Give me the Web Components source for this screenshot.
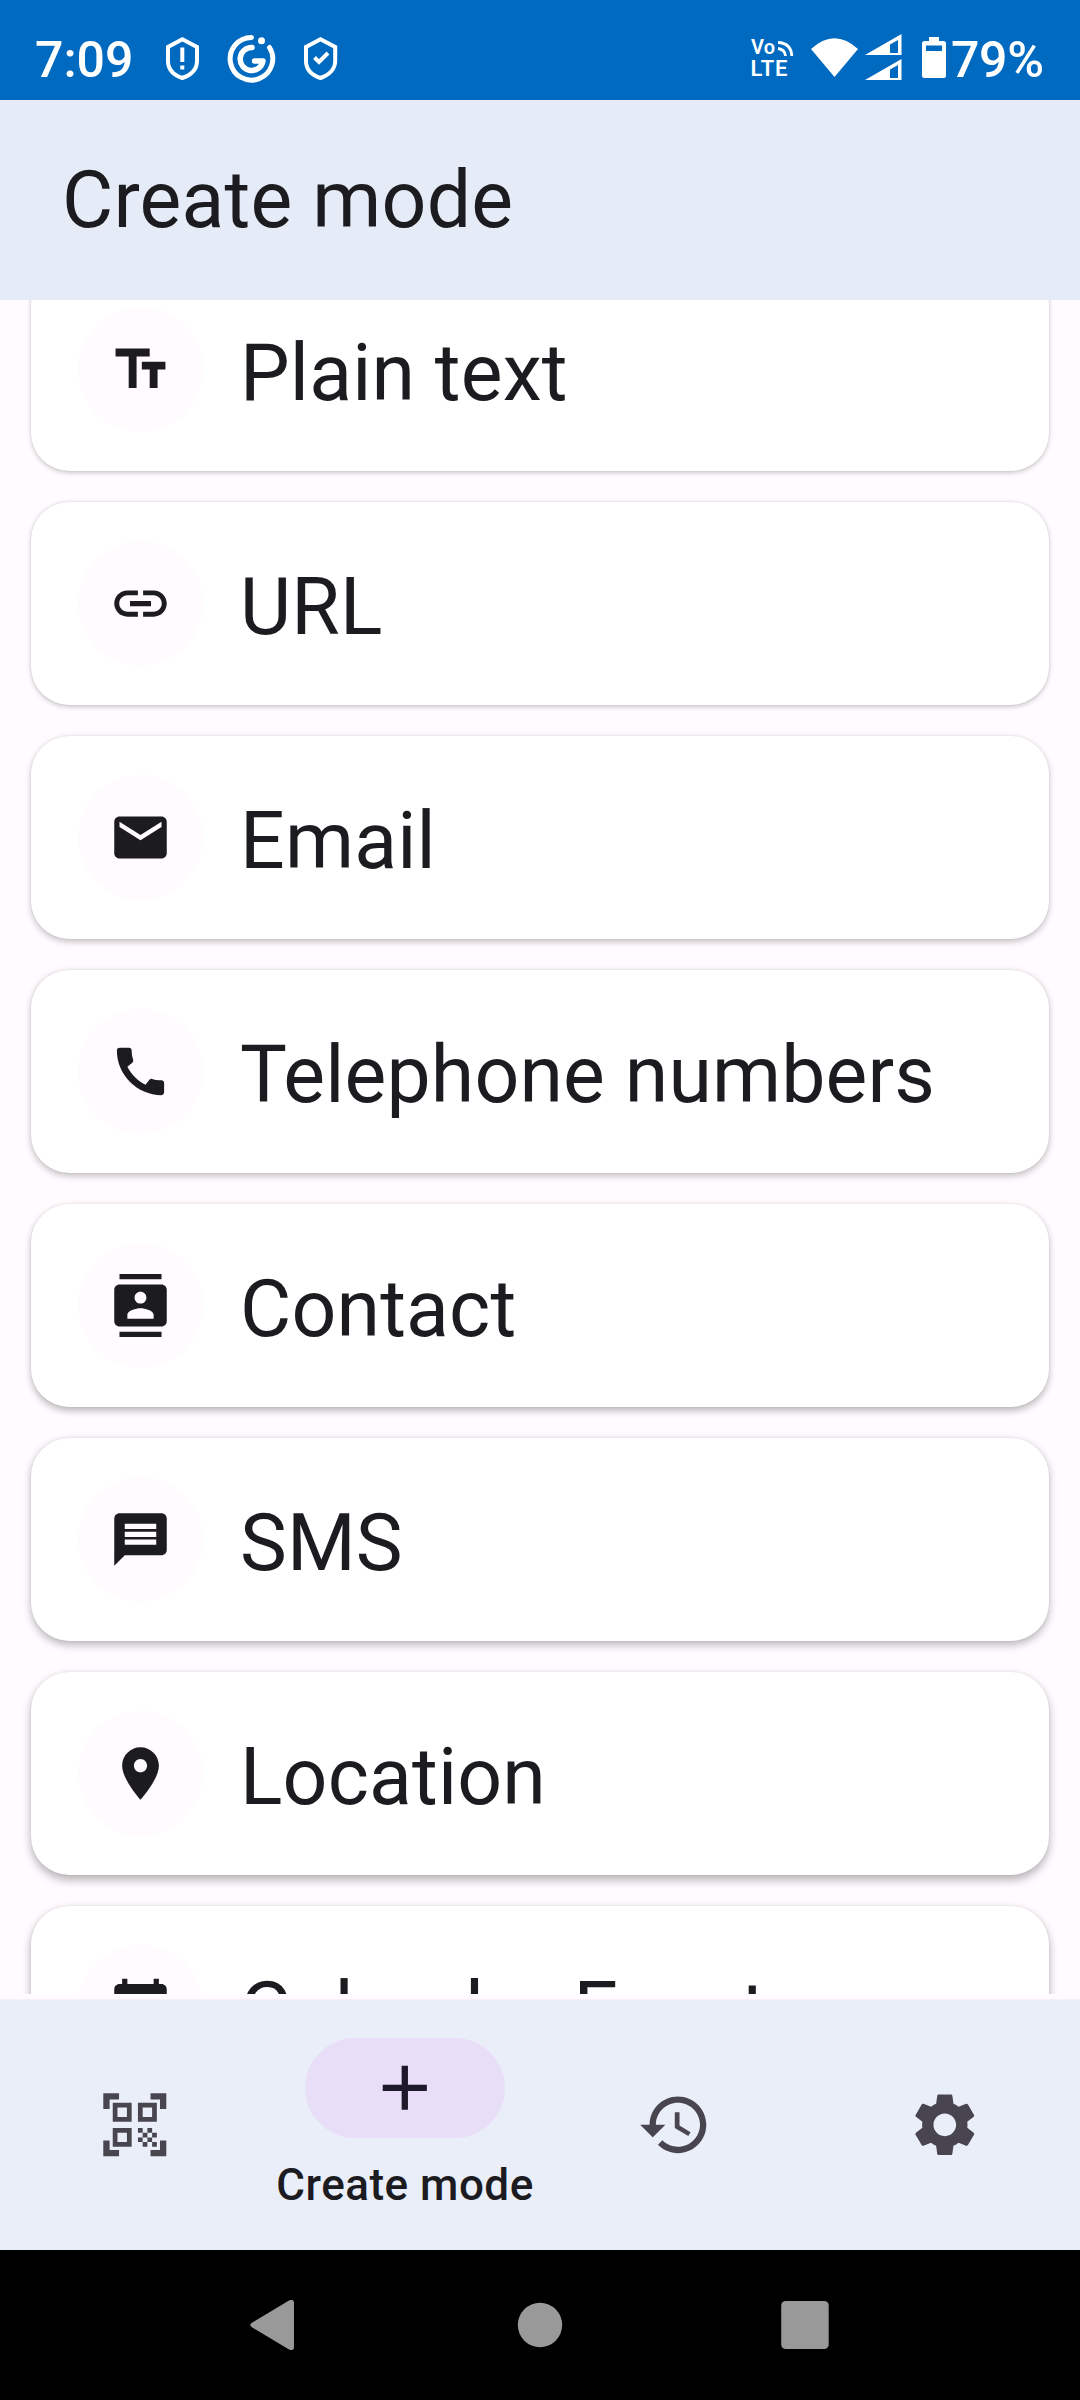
<!DOCTYPE html>
<html lang="en">
<head>
<meta charset="utf-8">
<title>Create mode</title>
<style>
html,body{margin:0;padding:0;background:#000}
body{width:1080px;height:2400px;overflow:hidden;font-family:Roboto,"Liberation Sans",sans-serif;color:#1c1b1f}
</style>
</head>
<body>
<qr-app></qr-app>
<script>
const ICONS = {
  text: 'M2.5 4v3h5v12h3V7h5V4h-13zm19 5h-9v3h3v7h3v-7h3V9z',
  link: 'M3.9 12c0-1.71 1.39-3.1 3.1-3.1h4V7H7c-2.76 0-5 2.24-5 5s2.24 5 5 5h4v-1.9H7c-1.71 0-3.1-1.39-3.1-3.1zM8 13h8v-2H8v2zm9-6h-4v1.9h4c1.71 0 3.1 1.39 3.1 3.1s-1.39 3.1-3.1 3.1h-4V17h4c2.76 0 5-2.24 5-5s-2.24-5-5-5z',
  email: 'M20 4H4c-1.1 0-1.99.9-1.99 2L2 18c0 1.1.9 2 2 2h16c1.1 0 2-.9 2-2V6c0-1.1-.9-2-2-2zm0 4l-8 5-8-5V6l8 5 8-5v2z',
  phone: 'M20.01 15.38c-1.23 0-2.42-.2-3.53-.56-.35-.12-.74-.03-1.01.24l-1.57 1.97c-2.83-1.35-5.48-3.9-6.89-6.83l1.95-1.66c.27-.28.35-.67.24-1.02-.37-1.11-.56-2.3-.56-3.53 0-.54-.45-.99-.99-.99H4.19C3.65 3 3 3.24 3 3.99 3 13.28 10.73 21 20.01 21c.71 0 .99-.63.99-1.18v-3.45c0-.54-.45-.99-.99-.99z',
  contact: 'M20 0H4v2h16V0zM4 24h16v-2H4v2zM20 4H4c-1.1 0-2 .9-2 2v12c0 1.1.9 2 2 2h16c1.1 0 2-.9 2-2V6c0-1.1-.9-2-2-2zm-8 2.75c1.24 0 2.25 1.01 2.25 2.25s-1.01 2.25-2.25 2.25S9.75 10.24 9.75 9 10.76 6.75 12 6.75zM17 17H7v-1.5c0-1.67 3.33-2.5 5-2.5s5 .83 5 2.5V17z',
  sms: 'M20 2H4c-1.1 0-1.99.9-1.99 2L2 22l4-4h14c1.1 0 2-.9 2-2V4c0-1.1-.9-2-2-2zm-2 12H6v-2h12v2zm0-3H6V9h12v2zm0-3H6V6h12v2z',
  place: 'M12 2C8.13 2 5 5.13 5 9c0 5.25 7 13 7 13s7-7.75 7-13c0-3.87-3.13-7-7-7zm0 9.5c-1.38 0-2.5-1.12-2.5-2.5s1.12-2.5 2.5-2.5 2.5 1.12 2.5 2.5-1.12 2.5-2.5 2.5z',
  calendar: 'M20 3h-1V1h-2v2H7V1H5v2H4c-1.1 0-2 .9-2 2v16c0 1.1.9 2 2 2h16c1.1 0 2-.9 2-2V5c0-1.1-.9-2-2-2zm0 18H4V8h16v13z',
  scan: 'M9.5,6.5v3h-3v-3H9.5M11,5H5v6h6V5zM9.5,14.5v3h-3v-3H9.5M11,13H5v6h6V13zM17.5,6.5v3h-3v-3H17.5M19,5h-6v6h6V5zM13,13h1.5v1.5H13zM14.5,14.5H16V16h-1.5zM16,13h1.5v1.5H16zM13,16h1.5v1.5H13zM14.5,17.5H16V19h-1.5zM16,16h1.5v1.5H16zM17.5,14.5H19V16h-1.5zM17.5,17.5H19V19h-1.5zM22,7h-2V4h-3V2h5zM22,22v-5h-2v3h-3v2zM2,22h5v-2H4v-3H2zM2,2v5h2V4h3V2z',
  add: 'M19 13h-6v6h-2v-6H5v-2h6V5h2v6h6v2z',
  history: 'M13 3c-4.97 0-9 4.03-9 9H1l3.89 3.89.07.14L9 12H6c0-3.87 3.13-7 7-7s7 3.13 7 7-3.13 7-7 7c-1.93 0-3.68-.79-4.94-2.06l-1.42 1.42C8.27 19.99 10.51 21 13 21c4.97 0 9-4.03 9-9s-4.03-9-9-9zm-1 5v5l4.28 2.54.72-1.21-3.5-2.08V8H12z',
  settings: 'M19.14 12.94c.04-.3.06-.61.06-.94 0-.32-.02-.64-.07-.94l2.03-1.58c.18-.14.23-.41.12-.61l-1.92-3.32c-.12-.22-.37-.29-.59-.22l-2.39.96c-.5-.38-1.03-.7-1.62-.94l-.36-2.54c-.04-.24-.24-.41-.48-.41h-3.84c-.24 0-.43.17-.47.41l-.36 2.54c-.59.24-1.13.57-1.62.94l-2.39-.96c-.22-.08-.47 0-.59.22L2.74 8.87c-.12.21-.08.47.12.61l2.03 1.58c-.05.3-.09.63-.09.94s.02.64.07.94l-2.03 1.58c-.18.14-.23.41-.12.61l1.92 3.32c.12.22.37.29.59.22l2.39-.96c.5.38 1.03.7 1.62.94l.36 2.54c.05.24.24.41.48.41h3.84c.24 0 .44-.17.47-.41l.36-2.54c.59-.24 1.13-.56 1.62-.94l2.39.96c.22.08.47 0 .59-.22l1.92-3.32c.12-.22.07-.47-.12-.61l-2.01-1.58zM12 15.6c-1.98 0-3.6-1.62-3.6-3.6s1.62-3.6 3.6-3.6 3.6 1.62 3.6 3.6-1.62 3.6-3.6 3.6z'
};

class Base extends HTMLElement {
  connectedCallback() {
    if (!this.shadowRoot) this.attachShadow({ mode: 'open' }).innerHTML = this.view();
  }
}

customElements.define('md-icon', class extends Base {
  view() {
    const s = this.getAttribute('size') || 63;
    return `<style>:host{display:block;flex:none;width:${s}px;height:${s}px}svg{display:block;fill:currentColor}</style>
    <svg width="${s}" height="${s}" viewBox="0 0 24 24"><path fill-rule="evenodd" d="${ICONS[this.getAttribute('name')]}"/></svg>`;
  }
});

customElements.define('status-bar', class extends Base {
  view() {
    return `<style>
    :host{display:flex;flex:none;box-sizing:border-box;height:100px;background:#006ac1;color:#fff;padding:25px 36px 0 35px;justify-content:space-between;font-weight:500;font-size:50px;line-height:70px}
    div{display:flex}
    .time{width:120px}
    .level{width:93px;margin-left:-2px;letter-spacing:-.3px}
    svg{display:block;flex:none;fill:none;stroke:#fff}
    </style>
    <div><span class="time">7:09</span>
    <svg width="190" height="65" viewBox="155 25 190 65">
      <g stroke-width="4"><path d="M182.300 39.200L197 47V61C197 69 191 75 182.300 78C173.500 75 168 69 168 61V47Z"/><path d="M182.300 47.500V62M182.300 65.500V69.500"/></g>
      <path stroke-width="5" stroke-linecap="round" d="M251.500 37.500A21.300 21.300 0 1 0 269.500 47.500"/>
      <path stroke-width="5.500" stroke-linecap="round" stroke-linejoin="round" d="M252 47.500A11.500 11.500 0 1 0 263 61H254.500"/>
      <circle cx="261.500" cy="40.800" r="3.500" fill="#fff" stroke="none"/>
      <g stroke-width="4"><path d="M320.500 39.200L335.200 47V61C335.200 69 329 75 320.500 78C311.500 75 306 69 306 61V47Z"/><path d="M314.500 57.500L319 62L328 53"/></g>
    </svg></div>
    <div>
    <svg width="213" height="65" viewBox="740 25 213 65">
      <g fill="#fff" stroke="none" font-family="Roboto" font-weight="600"><text x="751" y="54" font-size="20" textLength="24">Vo</text><text x="750.500" y="76.300" font-size="22" textLength="37">LTE</text></g>
      <path stroke-width="2.800" d="M778 42.500Q791 43 791.800 56M778 48.500Q785 49.500 785.500 56"/>
      <path fill="#fff" stroke="none" d="M811 49Q834.500 27.500 858 49L834.500 77Z"/>
      <path fill="#fff" stroke="none" fill-rule="evenodd" d="M865 55L901.500 34V55ZM890 44.500V53H898V40ZM865 80L901.500 59V80ZM890 69.500V78H898V65Z"/>
      <path fill="#fff" stroke="none" fill-rule="evenodd" d="M929 37H939V41H943.500Q946 41 946 43.500V75.500Q946 78 943.500 78H924.500Q922 78 922 75.500V43.500Q922 41 924.500 41H929ZM926 45.500V51H942V45.500Z"/>
    </svg><span class="level">79%</span></div>`;
  }
});

customElements.define('top-bar', class extends Base {
  view() {
    return `<style>:host{display:flex;flex:none;box-sizing:border-box;height:200px;align-items:center;background:#e5ebf7;padding:0 62px;font-size:78.75px;line-height:94px;letter-spacing:.2px}</style><slot></slot>`;
  }
});

customElements.define('mode-card', class extends Base {
  view() {
    const n = +this.getAttribute('depth');
    return `<style>
    :host{display:flex;flex:none;box-sizing:border-box;height:203px;align-items:center;background:#fff;border-radius:38px;padding:0 47px;gap:37px;font-size:78.75px;line-height:94px;letter-spacing:.16px;
      box-shadow:0 ${1.5 + n * .45}px ${5 + n * .7}px rgba(0,0,0,${.2 + n * .016}),0 0 2px rgba(0,0,0,.08)}
    .disc{display:flex;flex:none;width:125px;height:125px;border-radius:50%;background:#fffbff;align-items:center;justify-content:center}
    .label{padding-top:6px;white-space:nowrap}
    </style><div class="disc"><md-icon name="${this.getAttribute('icon')}"></md-icon></div><div class="label"><slot></slot></div>`;
  }
});

customElements.define('mode-list', class extends Base {
  view() {
    return `<style>
    :host{display:flex;flex:none;flex-direction:column;height:1700px;box-sizing:border-box;background:#fffbff;padding-bottom:6px}
    .clip{height:1694px;overflow:hidden;display:flex;flex-direction:column}
    .track{display:flex;flex-direction:column;gap:31px;margin-top:-32px;padding:0 31px}
    </style><div class="clip"><div class="track"><slot></slot></div></div>`;
  }
});

customElements.define('nav-item', class extends Base {
  view() {
    const on = this.hasAttribute('active');
    return `<style>
    :host{display:flex;flex:1;flex-direction:column;align-items:center;justify-content:${on ? 'flex-start' : 'center'};color:#49454f}
    .pill{display:flex;align-items:center;justify-content:center;width:200px;height:100px;border-radius:50px;${on ? 'color:#1d192b;background:#e8def8;margin-top:38px' : 'color:#49454f'}}
    .label{font-size:44px;line-height:50px;font-weight:500;letter-spacing:.5px;color:#1c1b1f;margin-top:22px;white-space:nowrap}
    </style><div class="pill"><md-icon name="${this.getAttribute('icon')}" size="75.6"></md-icon></div>${on ? '<div class="label"><slot></slot></div>' : ''}`;
  }
});

customElements.define('nav-bar', class extends Base {
  view() {
    return `<style>:host{display:flex;flex:none;height:250px;background:#e9eef9;box-shadow:0 0 2px rgba(120,60,60,.15)}</style><slot></slot>`;
  }
});

customElements.define('system-keys', class extends Base {
  view() {
    return `<style>:host{display:flex;flex:none;height:150px;background:#000;align-items:center;justify-content:center}svg{display:block}</style>
    <svg width="580" height="50" viewBox="250 2300 580 50" fill="#999">
      <path d="M251.500 2323Q249 2325 251.500 2327L289 2349.500Q294 2351.500 294 2347V2303Q294 2298.500 289 2300.500Z"/>
      <circle cx="540" cy="2325" r="22.200"/>
      <rect x="781.200" y="2301" width="47.500" height="48" rx="4.500"/>
    </svg>`;
  }
});

customElements.define('qr-app', class extends Base {
  view() {
    const items = [['text', 'Plain text'], ['link', 'URL'], ['email', 'Email'], ['phone', 'Telephone numbers'], ['contact', 'Contact'], ['sms', 'SMS'], ['place', 'Location'], ['calendar', 'Calendar Event']];
    return `<style>:host{display:flex;flex-direction:column;width:1080px;height:2400px}</style>
    <status-bar></status-bar>
    <top-bar>Create mode</top-bar>
    <mode-list>${items.map(([i, t], n) => `<mode-card icon="${i}" depth="${n}">${t}</mode-card>`).join('')}</mode-list>
    <nav-bar><nav-item icon="scan"></nav-item><nav-item icon="add" active>Create mode</nav-item><nav-item icon="history"></nav-item><nav-item icon="settings"></nav-item></nav-bar>
    <system-keys></system-keys>`;
  }
});
</script>
</body>
</html>
